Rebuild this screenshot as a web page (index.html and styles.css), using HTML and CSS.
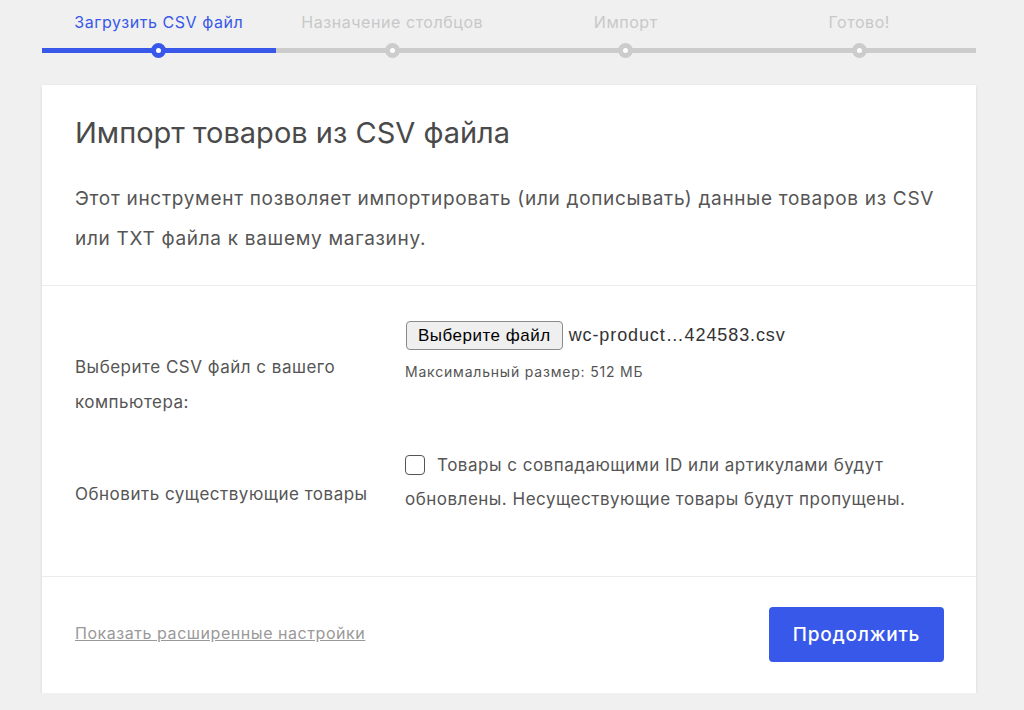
FILE: index.html
```html
<!DOCTYPE html>
<html lang="ru">
<head>
<meta charset="utf-8">
<title>Импорт товаров</title>
<link rel="stylesheet" href="styles.css">
</head>
<body>
<div class="page">
  <ol class="steps">
    <li class="step active">
      <span class="step-label">Загрузить CSV файл</span>
      <span class="step-track"><span class="step-dot"></span></span>
    </li>
    <li class="step">
      <span class="step-label">Назначение столбцов</span>
      <span class="step-track"><span class="step-dot"></span></span>
    </li>
    <li class="step">
      <span class="step-label">Импорт</span>
      <span class="step-track"><span class="step-dot"></span></span>
    </li>
    <li class="step">
      <span class="step-label">Готово!</span>
      <span class="step-track"><span class="step-dot"></span></span>
    </li>
  </ol>

  <div class="card">
    <header class="card-head">
      <h2 class="card-title">Импорт товаров из CSV файла</h2>
      <p class="card-desc">Этот инструмент позволяет импортировать (или дописывать) данные товаров из CSV или TXT файла к вашему магазину.</p>
    </header>

    <section class="card-body">
      <div class="row row-file">
        <label class="row-label">Выберите CSV файл с вашего компьютера:</label>
        <div class="row-control">
          <div class="file-line">
            <span class="file-btn">Выберите файл</span>
            <span class="file-name">wc-product…424583.csv</span>
          </div>
          <div class="file-hint">Максимальный размер: 512 МБ</div>
        </div>
      </div>
      <div class="row row-check">
        <label class="row-label">Обновить существующие товары</label>
        <div class="row-control">
          <p class="check-text"><span class="checkbox"></span>Товары с совпадающими ID или артикулами будут обновлены. Несуществующие товары будут пропущены.</p>
        </div>
      </div>
    </section>

    <footer class="card-foot">
      <a class="adv-link" href="#">Показать расширенные настройки</a>
      <button class="continue-btn" type="button">Продолжить</button>
    </footer>
  </div>
</div>
</body>
</html>
```
FILE: styles.css
```css
* { box-sizing: border-box; }

html, body {
  margin: 0;
  padding: 0;
  background: #f0f0f0;
  font-family: "Inter", "Noto Sans", sans-serif;
  color: #555;
}

.page {
  width: 934px;
  margin-left: 42px;
}

/* Steps */
.steps {
  list-style: none;
  margin: 0;
  padding: 12px 0 0;
  display: flex;
}

.step {
  flex: 1;
  display: flex;
  flex-direction: column;
  align-items: stretch;
  text-align: center;
}

.step-label {
  font-size: 16px;
  line-height: 20px;
  letter-spacing: 0.55px;
  color: #c8c8c8;
}

.step.active .step-label {
  color: #3858e9;
}

.step-track {
  position: relative;
  display: block;
  height: 5px;
  margin-top: 16px;
  background: #cccccc;
}

.step.active .step-track {
  background: #3858e9;
}

.step-dot {
  position: absolute;
  left: 50%;
  top: 50%;
  width: 15px;
  height: 15px;
  margin: -7.5px 0 0 -7.5px;
  border-radius: 50%;
  background: #fff;
  border: 5px solid #cccccc;
}

.step.active .step-dot {
  border-color: #3858e9;
}

/* Card */
.card {
  margin-top: 32px;
  background: #fff;
  box-shadow: 0 1px 3px rgba(0, 0, 0, 0.12);
}

.card-head {
  padding: 31px 33px 26px;
  border-bottom: 1px solid #ececec;
}

.card-title {
  margin: 0;
  font-size: 29px;
  line-height: 34px;
  font-weight: 400;
  color: #4a4a4a;
}

.card-desc {
  margin: 29px 0 0;
  font-size: 19px;
  line-height: 40px;
  letter-spacing: 0.7px;
  color: #555;
}

.card-body {
  padding: 35px 33px 60px;
  border-bottom: 1px solid #ececec;
}

.row {
  display: grid;
  grid-template-columns: 330px 1fr;
  align-items: start;
}

.row + .row {
  margin-top: 28px;
}

.row-label {
  margin-top: 29px;
  font-size: 17px;
  line-height: 35px;
  letter-spacing: 0.5px;
  color: #555;
  padding-right: 16px;
}

.file-line {
  display: flex;
  align-items: center;
  gap: 6px;
}

.file-btn {
  display: inline-block;
  height: 29px;
  padding: 0 11px;
  line-height: 27px;
  font-family: "Liberation Sans", Arial, sans-serif;
  font-size: 17px;
  letter-spacing: 0.5px;
  color: #000;
  background: #efefef;
  border: 1px solid #8a8a8a;
  border-radius: 4px;
  margin-left: 1px;
}

.file-name {
  font-family: "Liberation Sans", Arial, sans-serif;
  font-size: 18px;
  letter-spacing: 0.9px;
  color: #333;
}

.file-hint {
  margin-top: 13px;
  font-size: 14px;
  line-height: 18px;
  letter-spacing: 0.8px;
  color: #555;
}

.check-text {
  margin: 0;
  font-size: 17px;
  line-height: 34px;
  letter-spacing: 0.5px;
  color: #555;
}

.checkbox {
  display: inline-block;
  width: 20px;
  height: 20px;
  border: 1.5px solid #555;
  border-radius: 4px;
  vertical-align: -4px;
  margin-right: 12px;
  background: #fff;
}

.card-foot {
  display: flex;
  align-items: center;
  justify-content: space-between;
  padding: 30px 32px 31px 33px;
}

.adv-link {
  margin-bottom: 3px;
  font-size: 16px;
  letter-spacing: 0.55px;
  color: #999;
  text-decoration: underline;
}

.continue-btn {
  width: 175px;
  height: 55px;
  border: 0;
  border-radius: 4px;
  background: #3858e9;
  color: #fff;
  font-family: "Inter", sans-serif;
  font-size: 19px;
  font-weight: 500;
  letter-spacing: 0.8px;
}
```
